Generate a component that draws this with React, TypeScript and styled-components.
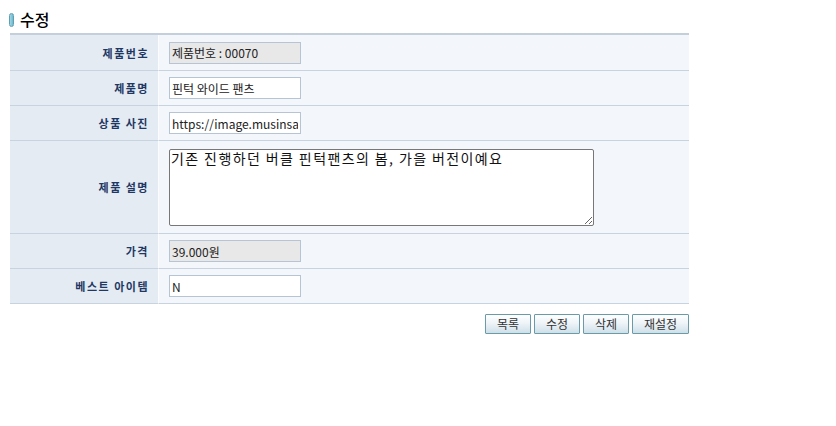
import React from "react";
import styled, { createGlobalStyle } from "styled-components";

const Global = createGlobalStyle`
  html, body { margin: 0; padding: 0; background: #fff; }
  body { font-family: "Noto Sans CJK KR", "Noto Sans", sans-serif; color: #222; }
`;

const Page = styled.div`
  padding: 4px 147px 0 10px;
  width: 679px;
`;

const TitleRow = styled.div`
  display: flex;
  align-items: center;
  gap: 6px;
  height: 29px;
  margin-left: -1px;
`;

const TitleMark = styled.span`
  display: block;
  width: 3px;
  height: 12px;
  border: 1px solid #5f9fb3;
  border-radius: 3px;
  background: linear-gradient(90deg, #9fd6e6, #6fb9cf);
  margin-top: 3px;
`;

const Title = styled.h1`
  margin: 0;
  font-size: 16px;
  font-weight: 500;
  color: #000;
  line-height: 20px;
`;

const Table = styled.div`
  border-top: 2px solid #c3cfdb;
  display: grid;
  grid-template-columns: 148px 1fr;
`;

const Label = styled.div<{ $h: number }>`
  height: ${(p) => p.$h}px;
  background: #e4ebf3;
  border-bottom: 1px solid #c7d3df;
  display: flex;
  align-items: center;
  justify-content: flex-end;
  padding-right: 9px;
  font-size: 11px;
  font-weight: 700;
  letter-spacing: 1.5px;
  color: #1f3763;
`;

const Value = styled.div<{ $h: number }>`
  height: ${(p) => p.$h}px;
  background: #f3f6fa;
  border-left: 1px solid #fbfcfe;
  border-bottom: 1px solid #c7d3df;
  display: flex;
  align-items: center;
  padding-left: 10px;
`;

const Input = styled.input<{ $ro?: boolean }>`
  box-sizing: border-box;
  width: 132px;
  height: 22px;
  border: 1px solid #b7c4d3;
  background: ${(p) => (p.$ro ? "#e8e8e8" : "#fff")};
  font-family: "Noto Sans CJK KR", sans-serif;
  font-size: 12px;
  color: #222;
  padding: 0 2px;
  outline: none;
`;

const TextArea = styled.textarea`
  box-sizing: border-box;
  width: 425px;
  height: 77px;
  border: 1px solid #777;
  border-radius: 2px;
  font-family: "Noto Sans CJK KR", sans-serif;
  font-size: 14px;
  letter-spacing: 1.4px;
  line-height: 16px;
  padding: 0 1px;
  color: #111;
  resize: both;
  outline: none;
`;

const Buttons = styled.div`
  display: flex;
  justify-content: flex-end;
  gap: 3px;
  margin-top: 10px;
`;

const Button = styled.button<{ $w: number }>`
  box-sizing: border-box;
  width: ${(p) => p.$w}px;
  height: 20px;
  border: 1px solid #6b9aa9;
  border-radius: 1px;
  background: linear-gradient(180deg, #ffffff 0%, #eef4f8 45%, #cfdfe9 100%);
  font-family: "Noto Sans CJK KR", sans-serif;
  font-size: 12px;
  color: #333;
  padding: 0;
  line-height: 18px;
`;

export default function App() {
  return (
    <>
      <Global />
      <Page>
        <TitleRow>
          <TitleMark />
          <Title>수정</Title>
        </TitleRow>
        <Table>
          <Label $h={35}>제품번호</Label>
          <Value $h={35}>
            <Input $ro readOnly value="제품번호 : 00070" />
          </Value>
          <Label $h={34}>제품명</Label>
          <Value $h={34}>
            <Input readOnly value="핀턱 와이드 팬츠" />
          </Value>
          <Label $h={34}>상품 사진</Label>
          <Value $h={34}>
            <Input readOnly value="https://image.musinsa.com" />
          </Value>
          <Label $h={92}>제품 설명</Label>
          <Value $h={92}>
            <TextArea readOnly value="기존 진행하던 버클 핀턱팬츠의 봄, 가을 버전이예요" />
          </Value>
          <Label $h={34}>가격</Label>
          <Value $h={34}>
            <Input $ro readOnly value="39.000원" />
          </Value>
          <Label $h={34}>베스트 아이템</Label>
          <Value $h={34}>
            <Input readOnly value="N" />
          </Value>
        </Table>
        <Buttons>
          <Button $w={46}>목록</Button>
          <Button $w={46}>수정</Button>
          <Button $w={46}>삭제</Button>
          <Button $w={57}>재설정</Button>
        </Buttons>
      </Page>
    </>
  );
}
